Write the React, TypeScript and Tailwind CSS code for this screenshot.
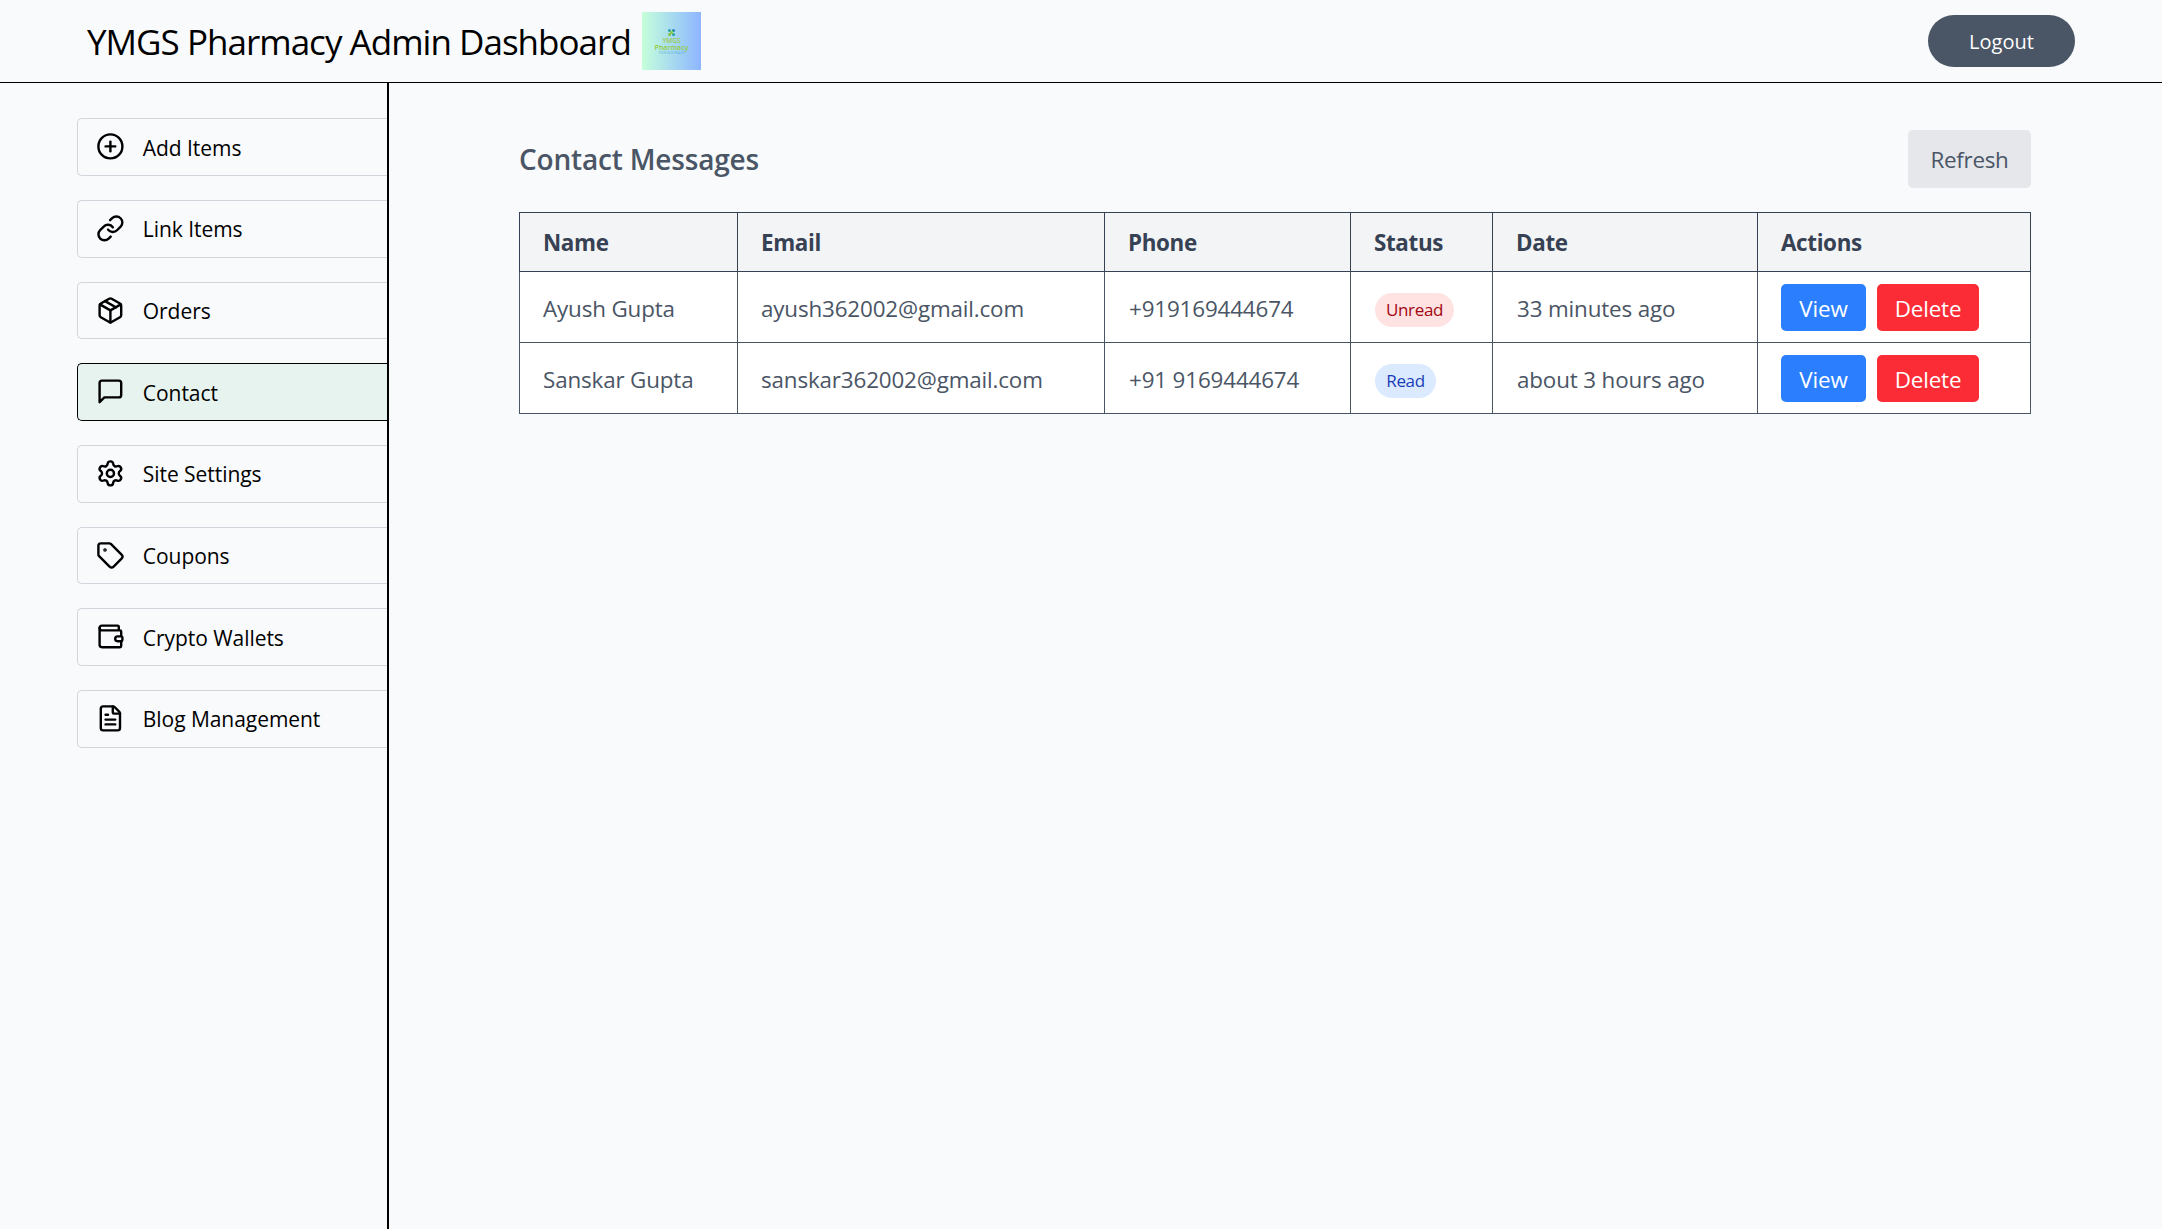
import React from "react";
import { CirclePlus, FileText, Link, Package, Settings, Tag, Wallet } from "lucide-react";

type IconProps = { className?: string };

function MessageIcon({ className }: IconProps) {
  return (
    <svg
      viewBox="0 0 24 24"
      fill="none"
      stroke="currentColor"
      strokeWidth="2"
      strokeLinecap="round"
      strokeLinejoin="round"
      className={className}
    >
      <path d="M21 15a2 2 0 0 1-2 2H7l-4 4V5a2 2 0 0 1 2-2h14a2 2 0 0 1 2 2z" />
    </svg>
  );
}

const navItems: { label: string; icon: React.ComponentType<IconProps>; active?: boolean }[] = [
  { label: "Add Items", icon: CirclePlus },
  { label: "Link Items", icon: Link },
  { label: "Orders", icon: Package },
  { label: "Contact", icon: MessageIcon, active: true },
  { label: "Site Settings", icon: Settings },
  { label: "Coupons", icon: Tag },
  { label: "Crypto Wallets", icon: Wallet },
  { label: "Blog Management", icon: FileText },
];

const messages = [
  {
    name: "Ayush Gupta",
    email: "ayush362002@gmail.com",
    phone: "+919169444674",
    read: false,
    date: "33 minutes ago",
  },
  {
    name: "Sanskar Gupta",
    email: "sanskar362002@gmail.com",
    phone: "+91 9169444674",
    read: true,
    date: "about 3 hours ago",
  },
];

const columns = ["Name", "Email", "Phone", "Status", "Date", "Actions"];

function Logo() {
  return (
    <div className="flex h-[58px] w-[59px] flex-col items-center bg-linear-to-r from-[#c6ffd9] to-[#8eb5ff] pt-[17px]">
      <svg viewBox="0 0 14 14" className="size-[7px]">
        <circle cx="3" cy="3" r="3" fill="#1f9fb5" />
        <circle cx="11" cy="3" r="3" fill="#1287b8" />
        <circle cx="3" cy="11" r="3" fill="#86c440" />
        <circle cx="11" cy="11" r="3" fill="#1f9fb5" />
        <path d="M4 4l6 6M10 4l-6 6" stroke="#86c440" strokeWidth="3" />
      </svg>
      <span className="mt-px text-[6.5px] leading-[7px] font-semibold text-[#9ccb4e]">YMGS</span>
      <span className="text-[7px] leading-[7px] font-semibold text-[#93c93f]">Pharmacy</span>
      <span className="text-[2.6px] leading-[4px] text-[#58b4d8]">YOUR GOOD HEALTH</span>
    </div>
  );
}

function Header() {
  return (
    <header className="flex h-[83px] shrink-0 items-center justify-between border-b border-black pr-[87px] pl-[87px]">
      <div className="flex items-center">
        <h1 className="w-[555px] pt-0.5 text-[35px] leading-[42px] tracking-[-0.98px] whitespace-nowrap text-black">
          YMGS Pharmacy Admin Dashboard
        </h1>
        <Logo />
      </div>
      <button className="h-[52px] w-[147px] rounded-full bg-[#4a5565] pt-0.5 text-[20px] text-white">
        Logout
      </button>
    </header>
  );
}

function Sidebar() {
  return (
    <aside className="w-[389px] shrink-0 border-r-2 border-black pt-[35.2px] pl-[77px]">
      <nav className="flex flex-col gap-6">
        {navItems.map(({ label, icon: Icon, active }) => (
          <a
            key={label}
            className={
              active
                ? "flex h-[57.7px] items-center gap-[18px] rounded-l-[5px] border border-r-0 border-black bg-[#e6f3ee] pl-[18px] text-black"
                : "flex h-[57.7px] items-center gap-[18px] rounded-l-[5px] border border-r-0 border-gray-300 pl-[18px] text-black"
            }
          >
            <Icon className="-mt-px size-[28.8px]" />
            <span className="mt-px text-[21px] leading-7 tracking-[-0.05px]">{label}</span>
          </a>
        ))}
      </nav>
    </aside>
  );
}

function StatusBadge({ read }: { read: boolean }) {
  return (
    <span
      className={
        read
          ? "mt-px flex h-[34px] w-[61px] items-center justify-center rounded-full bg-blue-100 text-[17px] tracking-[-0.35px] text-blue-800"
          : "mt-px flex h-[34px] w-[79px] items-center justify-center rounded-full bg-red-100 text-[17px] tracking-[-0.35px] text-red-800"
      }
    >
      {read ? "Read" : "Unread"}
    </span>
  );
}

function MessagesTable() {
  return (
    <table className="w-full table-fixed border-collapse text-[22.4px] leading-[30px] tracking-[-0.15px]">
      <colgroup>
        <col className="w-[218px]" />
        <col className="w-[367px]" />
        <col className="w-[246px]" />
        <col className="w-[142px]" />
        <col className="w-[265px]" />
        <col />
      </colgroup>
      <thead>
        <tr className="h-[59px] bg-gray-100">
          {columns.map((c) => (
            <th
              key={c}
              className="border border-[#364153] pt-0.5 pl-[23px] text-left font-bold tracking-[-0.35px] text-[#364153]"
            >
              {c}
            </th>
          ))}
        </tr>
      </thead>
      <tbody>
        {messages.map((m) => (
          <tr key={m.email} className="h-[71px] bg-white text-[#4a5565]">
            <td className="border border-[#4a5565] pt-1 pl-[23px]">{m.name}</td>
            <td className="border border-[#4a5565] pt-1 pl-[23px]">{m.email}</td>
            <td className="border border-[#4a5565] pt-1 pl-6">{m.phone}</td>
            <td className="border border-[#4a5565] pt-1 pl-6">
              <StatusBadge read={m.read} />
            </td>
            <td className="border border-[#4a5565] pt-1 pl-6">{m.date}</td>
            <td className="border border-[#4a5565] pl-[23px]">
              <div className="flex gap-[11px] text-white">
                <button className="h-[47px] w-[85px] rounded-[5px] bg-[#2b7fff] pt-1">View</button>
                <button className="h-[47px] w-[102px] rounded-[5px] bg-[#fb2c36] pt-1">Delete</button>
              </div>
            </td>
          </tr>
        ))}
      </tbody>
    </table>
  );
}

export default function App() {
  return (
    <div className="flex h-[1229px] w-full flex-col overflow-hidden bg-[#f9fafc] font-['Open_Sans',sans-serif]">
      <Header />
      <div className="flex min-h-0 flex-1">
        <Sidebar />
        <main className="flex-1 pt-[47px] pr-[131px] pl-[130px]">
          <div className="mb-6 flex h-[58px] items-center justify-between">
            <h2 className="text-[28px] leading-9 font-semibold tracking-[-0.18px] text-[#4a5565]">
              Contact Messages
            </h2>
            <button className="h-[58px] w-[123px] rounded-[5px] bg-gray-200 pt-0.5 text-[22.4px] tracking-[-0.3px] text-[#4a5565]">
              Refresh
            </button>
          </div>
          <MessagesTable />
        </main>
      </div>
    </div>
  );
}
